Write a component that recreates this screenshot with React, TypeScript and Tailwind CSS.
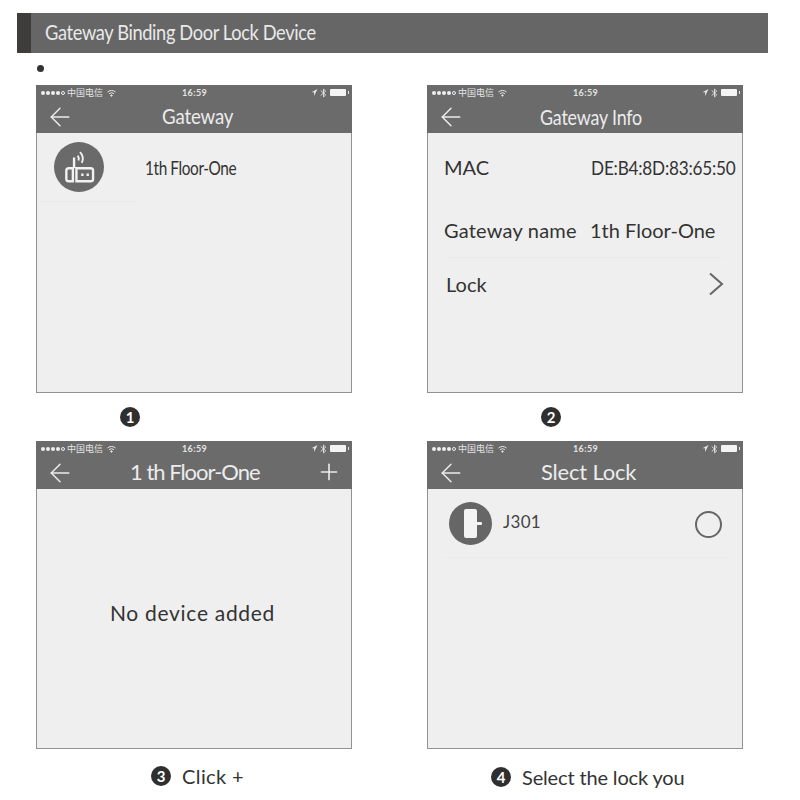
import type { ReactNode } from "react";
import { ArrowLeft, Plus } from "lucide-react";

const font = "font-['Lato','Noto_Sans_CJK_SC',sans-serif]";

function StatusBar() {
  return (
    <div className="relative flex h-[13px] items-center justify-between pl-[5px] pr-[3px] text-[#e4e4e4]">
      <div className="flex items-center gap-[1px]">
        {[0, 1, 2, 3, 4].map((i) => (
          <span
            key={i}
            className={i < 4 ? "h-[4px] w-[4px] rounded-full bg-[#efefef]" : "h-[4px] w-[4px] rounded-full border border-[#efefef]"}
          />
        ))}
        <span className="ml-[1px] text-[9px] leading-none">中国电信</span>
        <svg width="11" height="8" viewBox="0 0 10 8" className="ml-[2px]" fill="none" stroke="#e8e8e8" strokeWidth="1">
          <path d="M1 3a6 6 0 0 1 8 0M2.6 4.7a3.6 3.6 0 0 1 4.8 0" />
          <circle cx="5" cy="6.5" r="0.7" fill="#e8e8e8" />
        </svg>
      </div>
      <span className="absolute left-[146px] text-[9px] font-bold leading-none tracking-[0.4px]">16:59</span>
      <div className="flex items-center gap-[2px]">
        <svg width="7" height="7" viewBox="0 0 6 7" fill="#e8e8e8">
          <path d="M6 0 0 3.2h2.6V7z" />
        </svg>
        <svg width="7" height="10" viewBox="0 0 6 9" fill="none" stroke="#e8e8e8" strokeWidth="0.8">
          <path d="M0.5 2.3 5 6.2 3 8V1L5 2.8 0.5 6.7" />
        </svg>
        <div className="ml-[1px] h-[7px] w-[16px] rounded-[1px] bg-[#f4f4f4]" />
        <div className="h-[3px] w-[1px] bg-[#e4e4e4]" />
      </div>
    </div>
  );
}

function Phone({ title, titleClass, action, children }: { title: string; titleClass: string; action?: ReactNode; children?: ReactNode }) {
  return (
    <div className="flex h-[308px] w-[316px] flex-col border-x border-b border-[#929292] bg-[#efefef]">
      <div className="-mx-px h-[48px] shrink-0 bg-[#6b6b6b] pt-px text-[#ececec]">
        <StatusBar />
        <div className="relative flex h-[34px] items-center justify-between pl-[9px] pr-[10px]">
          <ArrowLeft size={30} strokeWidth={1.15} className="translate-y-px" />
          <span className={`absolute origin-left whitespace-nowrap leading-none ${titleClass}`}>{title}</span>
          {action}
        </div>
      </div>
      {children}
    </div>
  );
}

function Step({ n, className, children }: { n: number; className: string; children?: ReactNode }) {
  return (
    <div className={`flex h-[48px] items-center gap-[11px] text-[20px] text-[#333] ${className}`}>
      <span className="flex h-[20px] w-[20px] items-center justify-center rounded-full bg-[#2f2f2f] text-[15px] font-bold leading-none text-white">
        {n}
      </span>
      {children}
    </div>
  );
}

function RouterIcon() {
  return (
    <div className="flex h-[50px] w-[50px] items-center justify-center rounded-full bg-[#6a6a6a]">
      <svg width="38" height="38" viewBox="0 0 32 32" fill="none" stroke="#f2f2f2" strokeWidth="2" className="translate-x-px">
        <path d="M11 8v9M6.5 17H10v11H6.5a2 2 0 0 1-2-2v-7a2 2 0 0 1 2-2ZM13 17h12a2 2 0 0 1 2 2v7a2 2 0 0 1-2 2H13Z" />
        <path d="M16 3.5a8 8 0 0 1 1.5 9M14 6.5a4 4 0 0 1 .7 4" strokeWidth="1.6" />
        <path d="M17 22.5h2M21.5 22.5h2" />
      </svg>
    </div>
  );
}

function LockIcon() {
  return (
    <div className="flex h-[43px] w-[43px] items-center justify-center rounded-full bg-[#666]">
      <svg width="43" height="43" viewBox="0 0 43 43" fill="#f4f4f4">
        <rect x="15" y="7" width="13" height="29" rx="2" />
        <rect x="26" y="20" width="7" height="3" rx="1" />
      </svg>
    </div>
  );
}

export default function App() {
  return (
    <div className={`h-[800px] w-[800px] overflow-hidden bg-white pt-[13px] ${font}`}>
      <div className="ml-[17px] flex h-[40px] w-[751px] bg-[#666]">
        <div className="w-[14px] bg-[#3f3d39]" />
        <h1 className="origin-left scale-x-[0.83] whitespace-nowrap pl-[17px] pt-[6px] text-[22px] leading-[26px] tracking-[-0.45px] text-[#e9e9e9]">
          Gateway Binding Door Lock Device
        </h1>
      </div>
      <div className="ml-[37px] mt-[12px] h-[20px]">
        <div className="h-[7px] w-[7px] rounded-full bg-[#333]" />
      </div>

      <div className="ml-[36px] grid grid-cols-[316px_316px] gap-x-[75px]">
        <div>
          <Phone title="Gateway" titleClass="left-[126px] scale-x-[0.85] text-[22px] tracking-[-0.2px]">
            <div className="flex h-[68px] items-center pl-[17px]">
              <RouterIcon />
              <span className="ml-[41px] mt-[2px] origin-left scale-x-[0.81] whitespace-nowrap text-[19px] tracking-[-0.5px] text-[#333]">1th Floor-One</span>
            </div>
            <div className="h-px w-[100px] bg-[#ebebeb]" />
          </Phone>
          <Step n={1} className="pl-[84px]" />
        </div>

        <div>
          <Phone title="Gateway Info" titleClass="left-[113px] scale-x-[0.85] text-[21px] tracking-[-0.2px]">
            <div className="flex h-[67px] items-center justify-between pl-[16px] pr-[7px] text-[20px] text-[#333]">
              <span>MAC</span>
              <span className="origin-right scale-x-[0.857] whitespace-nowrap tracking-[-0.25px]">DE:B4:8D:83:65:50</span>
            </div>
            <div className="flex h-[57px] items-center pl-[16px] pt-[3px] text-[20px] text-[#333]">
              <span className="w-[146px] tracking-[0.2px]">Gateway name</span>
              <span>1th Floor-One</span>
            </div>
            <div className="mx-[16px] h-px bg-[#ebebeb]" />
            <div className="flex h-[54px] items-center justify-between pb-[2px] pl-[18px] pr-[18px] text-[20px] text-[#333]">
              <span>Lock</span>
              <svg width="16" height="24" viewBox="0 0 16 24" fill="none" stroke="#666" strokeWidth="2">
                <path d="M2 1.5 14 12 2 22.5" />
              </svg>
            </div>
          </Phone>
          <Step n={2} className="pl-[114px]" />
        </div>

        <div>
          <Phone
            title="1 th Floor-One"
            titleClass="left-[94px] text-[22px] tracking-[-1px]"
            action={<Plus size={26} strokeWidth={1.5} />}
          >
            <div className="flex flex-1 items-center justify-center pb-[12px] pr-[3px] text-[21px] tracking-[0.7px] text-[#333]">No device added</div>
          </Phone>
          <Step n={3} className="pl-[115px] pt-[6px]">
            <span className="tracking-[0.4px]">Click +</span>
          </Step>
        </div>

        <div>
          <Phone title="Slect Lock" titleClass="left-[114px] text-[22px] tracking-[-0.2px]">
            <div className="flex h-[68px] items-center pl-[21px] pr-[20px]">
              <LockIcon />
              <span className="mb-[3px] ml-[11px] flex-1 text-[17px] tracking-[0.3px] text-[#444]">J301</span>
              <span className="mt-[2px] h-[27px] w-[27px] rounded-full border-2 border-[#666]" />
            </div>
            <div className="mx-[14px] h-px bg-[#ebebeb]" />
          </Phone>
          <Step n={4} className="pl-[64px] pt-[8px]">
            <span className="tracking-[-0.15px]">Select the lock you</span>
          </Step>
        </div>
      </div>
    </div>
  );
}
